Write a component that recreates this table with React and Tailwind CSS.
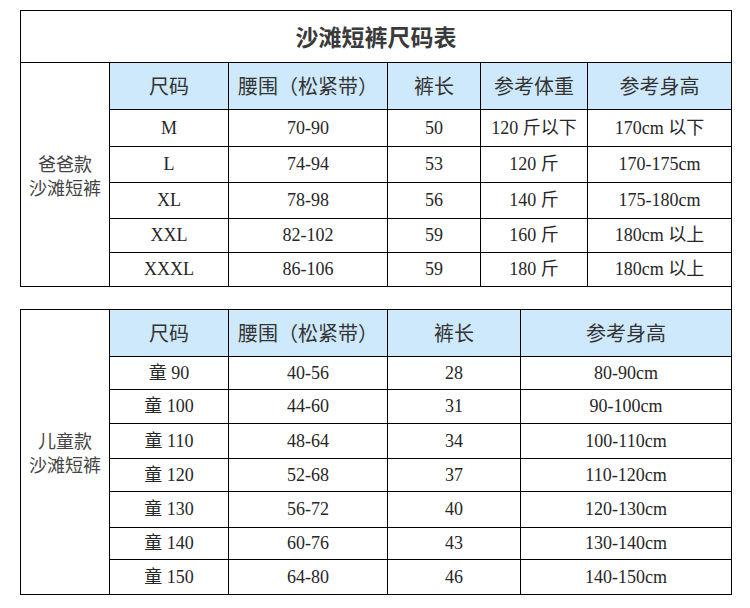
import React from "react";

const dadCols = ["w-[119px] border-r", "w-[159px] border-r", "w-[93px] border-r", "w-[107px] border-r", "w-[143px]"];
const kidCols = ["w-[119px] border-r", "w-[159px] border-r", "w-[133px] border-r", "w-[210px]"];

const dadHead = ["尺码", "腰围（松紧带）", "裤长", "参考体重", "参考身高"];
const kidHead = ["尺码", "腰围（松紧带）", "裤长", "参考身高"];

const dadRows = [
  { h: "h-[37px]", c: ["M", "70-90", "50", "120 斤以下", "170cm 以下"] },
  { h: "h-[36px]", c: ["L", "74-94", "53", "120 斤", "170-175cm"] },
  { h: "h-[36px]", c: ["XL", "78-98", "56", "140 斤", "175-180cm"] },
  { h: "h-[34px]", c: ["XXL", "82-102", "59", "160 斤", "180cm 以上"] },
  { h: "h-[34px]", c: ["XXXL", "86-106", "59", "180 斤", "180cm 以上"] },
];

const kidRows = [
  { h: "h-[33px]", c: ["童 90", "40-56", "28", "80-90cm"] },
  { h: "h-[34px]", c: ["童 100", "44-60", "31", "90-100cm"] },
  { h: "h-[35px]", c: ["童 110", "48-64", "34", "100-110cm"] },
  { h: "h-[33px]", c: ["童 120", "52-68", "37", "110-120cm"] },
  { h: "h-[36px]", c: ["童 130", "56-72", "40", "120-130cm"] },
  { h: "h-[32px]", c: ["童 140", "60-76", "43", "130-140cm"] },
  { h: "h-[35px]", c: ["童 150", "64-80", "46", "140-150cm"] },
];

const serif = "font-['Liberation_Serif','Noto_Sans_CJK_SC',serif]";
const sans = "font-['Noto_Sans_CJK_SC',sans-serif]";

function Table({ cols, head, rows }) {
  return (
    <div className="flex flex-col">
      <div className="flex h-[47px] border-b border-black bg-[#cde9fb]">
        {head.map((t, i) => (
          <div
            key={i}
            className={`${cols[i]} border-black flex items-center justify-center text-[20px] text-[#333] ${sans}`}
          >
            {t}
          </div>
        ))}
      </div>
      {rows.map((r, ri) => (
        <div key={ri} className={`flex ${r.h} border-b border-black`}>
          {r.c.map((t, i) => (
            <div
              key={i}
              className={`${cols[i]} border-black flex items-center justify-center text-[18px] text-[#262626] ${serif}`}
            >
              {t}
            </div>
          ))}
        </div>
      ))}
    </div>
  );
}

function Label({ a }) {
  return (
    <div className={`w-[89px] border-r border-b border-black flex flex-col items-center justify-center text-[18px] leading-[24px] text-[#444] ${sans}`}>
      <div>{a}</div>
      <div>沙滩短裤</div>
    </div>
  );
}

export default function App() {
  return (
    <div className="w-[750px] h-[608px] bg-white pl-[20px] pt-[10px]">
      <div className="w-[712px] border-r border-black">
        <div className="border-l border-black">
          <div className={`h-[53px] border-t border-b border-black flex items-center justify-center text-[23px] font-bold text-[#3a3a3a] ${sans}`}>
            沙滩短裤尺码表
          </div>
          <div className="flex">
            <Label a="爸爸款" />
            <Table cols={dadCols} head={dadHead} rows={dadRows} />
          </div>
        </div>
        <div className="h-[22px]" />
        <div className="flex border-l border-t border-black">
          <Label a="儿童款" />
          <Table cols={kidCols} head={kidHead} rows={kidRows} />
        </div>
      </div>
    </div>
  );
}
